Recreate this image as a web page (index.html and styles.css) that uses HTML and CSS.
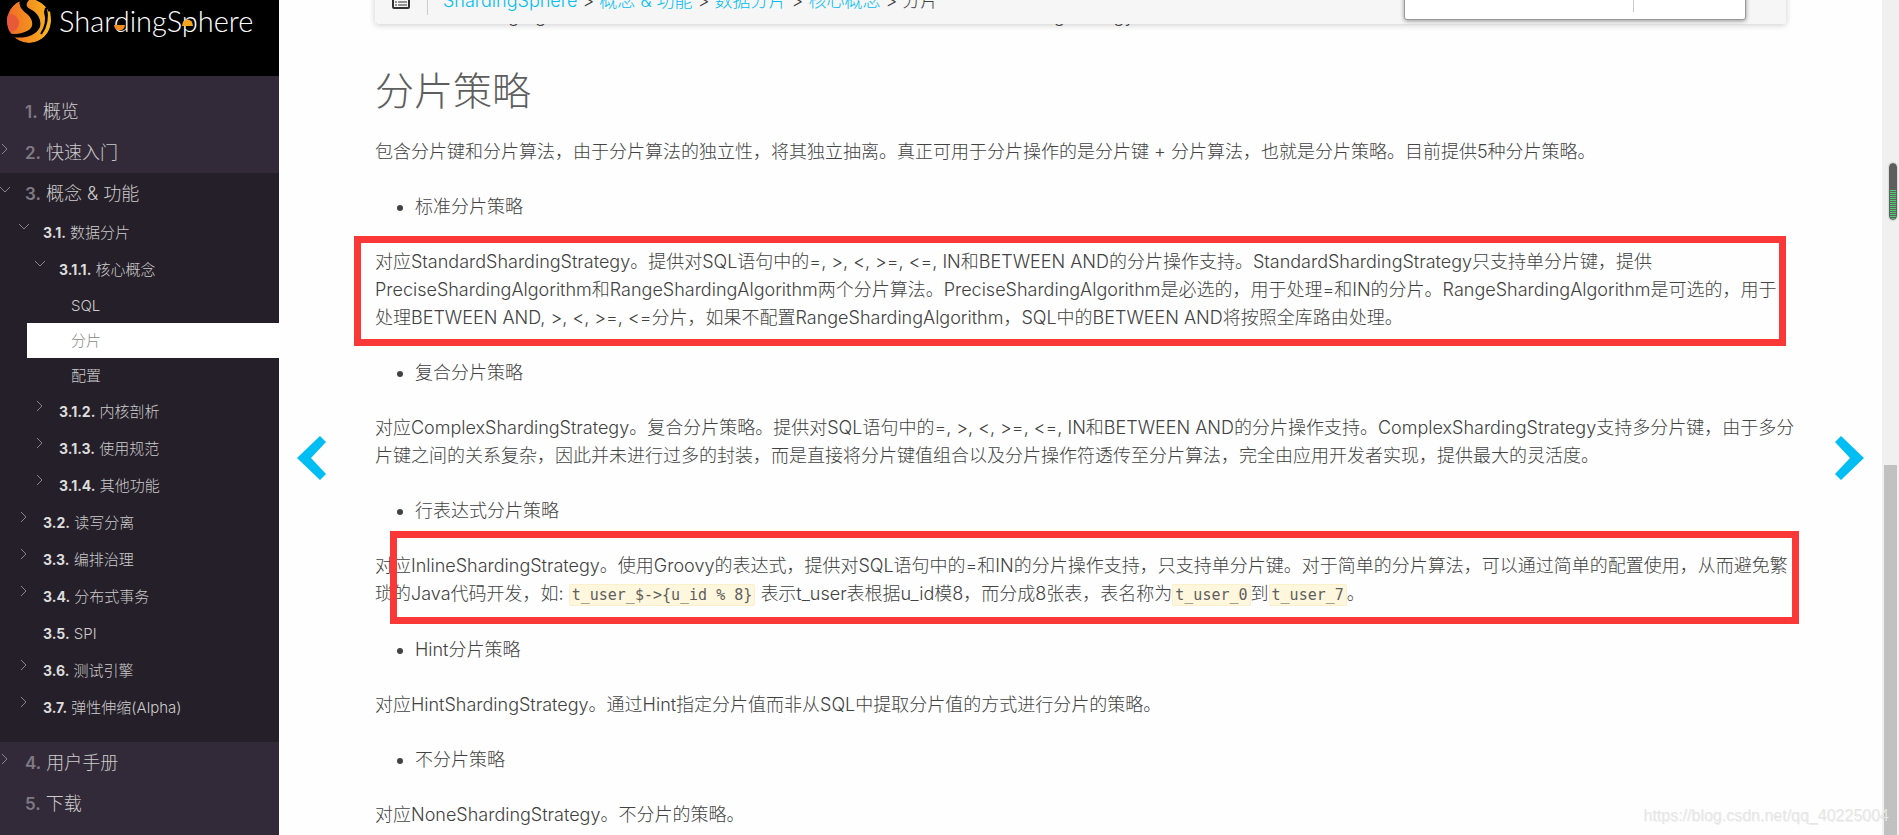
FILE: index.html
```html
<!DOCTYPE html>
<html lang="zh-CN">
<head>
    <meta charset="UTF-8">
    <meta name="viewport" content="width=device-width, initial-scale=1.0">
    <title>分片 :: ShardingSphere</title>
    <link rel="stylesheet" href="styles.css">
</head>
<body>

<nav class="sidebar">
    <a class="logo" href="#" aria-label="ShardingSphere">
        <svg width="279" height="76" viewBox="0 0 279 76">
            <defs>
                <linearGradient id="ball" x1="0" x2="1" y1="0" y2="0">
                    <stop offset="0" stop-color="#ee6a25"/>
                    <stop offset="1" stop-color="#f8b51c"/>
                </linearGradient>
                <clipPath id="ball-clip"><circle cx="29" cy="21" r="22"/></clipPath>
            </defs>
            <g clip-path="url(#ball-clip)">
                <circle cx="29" cy="21" r="22" fill="url(#ball)"/>
                <circle cx="10" cy="23" r="9" fill="#e8593a"/>
                <path d="M20 -1C18 6 22 10 27 14C34 20 34 28 27 31C21 34 14 35 8 33L12 37C24 39 36 36 40 27C42 18 36 12 30 9C25 6 26 3 30 -1Z" fill="#000"/>
            </g>
            <path d="M46 8C48 17 47 26 41 34C46 27 47 19 45 12Z" fill="#000" stroke="#000" stroke-width="2"/>
            <path d="M50 11C52 21 50 30 43 36C47 28 49 20 48 13Z" fill="#f8b51c"/>
            <text class="logo-text" x="59" y="32">ShardingSphere</text>
            <path d="M114 25H125A5 5 0 0 1 114 25Z" fill="#f28a1d"/>
            <path d="M182 26A5 6 0 0 1 193 26Z" fill="#f5a31a"/>
        </svg>
    </a>
    <ul class="menu">
        <li><a href="#"><b>1.</b> 概览</a></li>
        <li><a href="#"><svg class="chevron" viewBox="0 0 10 10"><path d="M2 0L7 5L2 10"/></svg><b>2.</b> 快速入门</a></li>
        <li class="open">
            <a href="#"><svg class="chevron" viewBox="0 0 10 10"><path d="M0 2L5 7L10 2"/></svg><b>3.</b> 概念 &amp; 功能</a>
            <ul class="level-2">
                <li>
                    <a href="#"><svg class="chevron" viewBox="0 0 10 10"><path d="M0 2L5 7L10 2"/></svg><b>3.1.</b> 数据分片</a>
                    <ul class="level-3">
                        <li>
                            <a href="#"><svg class="chevron" viewBox="0 0 10 10"><path d="M0 2L5 7L10 2"/></svg><b>3.1.1.</b> 核心概念</a>
                            <ul class="level-4">
                                <li><a href="#">SQL</a></li>
                                <li class="active"><a href="#">分片</a></li>
                                <li><a href="#">配置</a></li>
                            </ul>
                        </li>
                        <li><a href="#"><svg class="chevron" viewBox="0 0 10 10"><path d="M2 0L7 5L2 10"/></svg><b>3.1.2.</b> 内核剖析</a></li>
                        <li><a href="#"><svg class="chevron" viewBox="0 0 10 10"><path d="M2 0L7 5L2 10"/></svg><b>3.1.3.</b> 使用规范</a></li>
                        <li><a href="#"><svg class="chevron" viewBox="0 0 10 10"><path d="M2 0L7 5L2 10"/></svg><b>3.1.4.</b> 其他功能</a></li>
                    </ul>
                </li>
                <li><a href="#"><svg class="chevron" viewBox="0 0 10 10"><path d="M2 0L7 5L2 10"/></svg><b>3.2.</b> 读写分离</a></li>
                <li><a href="#"><svg class="chevron" viewBox="0 0 10 10"><path d="M2 0L7 5L2 10"/></svg><b>3.3.</b> 编排治理</a></li>
                <li><a href="#"><svg class="chevron" viewBox="0 0 10 10"><path d="M2 0L7 5L2 10"/></svg><b>3.4.</b> 分布式事务</a></li>
                <li><a href="#"><b>3.5.</b> SPI</a></li>
                <li><a href="#"><svg class="chevron" viewBox="0 0 10 10"><path d="M2 0L7 5L2 10"/></svg><b>3.6.</b> 测试引擎</a></li>
                <li><a href="#"><svg class="chevron" viewBox="0 0 10 10"><path d="M2 0L7 5L2 10"/></svg><b>3.7.</b> 弹性伸缩(Alpha)</a></li>
            </ul>
        </li>
        <li><a href="#"><svg class="chevron" viewBox="0 0 10 10"><path d="M2 0L7 5L2 10"/></svg><b>4.</b> 用户手册</a></li>
        <li><a href="#"><b>5.</b> 下载</a></li>
    </ul>
</nav>

<a class="nav-arrow prev" href="#" aria-label="上一页">
    <svg width="30" height="46" viewBox="0 0 30 46"><path d="M23 1L29 7L14 23L29 39L23 45L0 23Z"/></svg>
</a>

<main class="content">
    <div class="topbar">
        <svg class="toc-icon" width="18" height="16" viewBox="0 0 18 16">
            <rect x="1" y="1" width="16" height="14" rx="1" fill="none" stroke="#323232" stroke-width="2"/>
            <path d="M3 6H5M6 6H15M3 9H5M6 9H15M3 12H5M6 12H15" stroke="#323232"/>
        </svg>
        <div class="breadcrumbs">
            <a href="#">ShardingSphere</a> &gt; <a href="#">概念 &amp; 功能</a> &gt; <a href="#">数据分片</a> &gt; <a href="#">核心概念</a> &gt; 分片
        </div>
        <div class="search-popup"></div>
    </div>

    <article>
        <p>对应HintShardingAlgorithm，用于处理使用Hint行分片的场景。需要配合HintShardingStrategy使用。</p>
        <h2>分片策略</h2>
        <p>包含分片键和分片算法，由于分片算法的独立性，将其独立抽离。真正可用于分片操作的是分片键 + 分片算法，也就是分片策略。目前提供5种分片策略。</p>
        <ul><li>标准分片策略</li></ul>
        <p class="marked">对应StandardShardingStrategy。提供对SQL语句中的=, &gt;, &lt;, &gt;=, &lt;=, IN和BETWEEN AND的分片操作支持。StandardShardingStrategy只支持单分片键，提供<br>PreciseShardingAlgorithm和RangeShardingAlgorithm两个分片算法。PreciseShardingAlgorithm是必选的，用于处理=和IN的分片。RangeShardingAlgorithm是可选的，用于<br>处理BETWEEN AND, &gt;, &lt;, &gt;=, &lt;=分片，如果不配置RangeShardingAlgorithm，SQL中的BETWEEN AND将按照全库路由处理。</p>
        <ul><li>复合分片策略</li></ul>
        <p>对应ComplexShardingStrategy。复合分片策略。提供对SQL语句中的=, &gt;, &lt;, &gt;=, &lt;=, IN和BETWEEN AND的分片操作支持。ComplexShardingStrategy支持多分片键，由于多分<br>片键之间的关系复杂，因此并未进行过多的封装，而是直接将分片键值组合以及分片操作符透传至分片算法，完全由应用开发者实现，提供最大的灵活度。</p>
        <ul><li>行表达式分片策略</li></ul>
        <p class="marked marked-inline">对应InlineShardingStrategy。使用Groovy的表达式，提供对SQL语句中的=和IN的分片操作支持，只支持单分片键。对于简单的分片算法，可以通过简单的配置使用，从而避免繁<br>琐的Java代码开发，如: <code>t_user_$-&gt;{u_id % 8}</code> 表示t_user表根据u_id模8，而分成8张表，表名称为<code>t_user_0</code>到<code>t_user_7</code>。</p>
        <ul><li>Hint分片策略</li></ul>
        <p>对应HintShardingStrategy。通过Hint指定分片值而非从SQL中提取分片值的方式进行分片的策略。</p>
        <ul><li>不分片策略</li></ul>
        <p>对应NoneShardingStrategy。不分片的策略。</p>
    </article>
</main>

<a class="nav-arrow next" href="#" aria-label="下一页">
    <svg width="30" height="46" viewBox="0 0 30 46"><path d="M7 1L1 7L16 23L1 39L7 45L30 23Z"/></svg>
</a>

<div class="scrollbar">
    <div class="thumb"></div>
    <div class="meter"></div>
</div>

<div class="watermark">https://blog.csdn.net/qq_40225004</div>

</body>
</html>
```
FILE: styles.css
```css
* {
    box-sizing: border-box;
}
body {
    display: grid;
    grid-template-columns: 279px 96px 1fr 96px 17px;
    grid-template-rows: 100vh;
    height: 100vh;
    margin: 0;
    overflow: hidden;
    background: #fefefe;
    color: #424242;
    font-family: Inter, "Noto Sans CJK SC", sans-serif;
    font-size: 18px;
    font-weight: 300;
    line-height: 28px;
}
ul {
    margin: 0;
    padding: 0;
}
a {
    color: #00bdf3;
    text-decoration: none;
}

/* sidebar */
.sidebar {
    background: #322a38;
    overflow: hidden;
}
.logo {
    display: block;
    height: 76px;
    background: #000;
}
.logo-text {
    fill: #fff;
    font-family: Lato, sans-serif;
    font-size: 29px;
    font-weight: 300;
}
.menu {
    padding-top: 15px;
    list-style: none;
}
.menu ul {
    list-style: none;
    font-size: 15px;
}
.menu a {
    position: relative;
    display: block;
    height: 41px;
    padding-left: 25px;
    color: #ccc;
    line-height: 41px;
}
.menu b {
    color: #807a84;
    font-size: 17px;
    font-weight: 600;
}
.menu ul b {
    color: #ddd;
    font-size: 14px;
    font-weight: 700;
}
.open {
    background: #251f29;
}
.menu .level-2 {
    padding-bottom: 16px;
}
.menu .level-2 a {
    height: 37px;
    padding-left: 43px;
    line-height: 37px;
}
.menu .level-3 a {
    padding-left: 59px;
}
.menu .level-4 a {
    height: 35px;
    padding-left: 71px;
    line-height: 35px;
}
.menu .active a {
    margin-left: 27px;
    padding-left: 44px;
    background: #fff;
    color: #888;
}
.chevron {
    position: absolute;
    top: 12px;
    left: 0;
    width: 10px;
    height: 10px;
    fill: none;
    stroke: #88848b;
    overflow: visible;
}
.level-2 .chevron {
    top: 8px;
    left: 19px;
}
.level-3 .chevron {
    left: 35px;
}

/* previous / next page */
.nav-arrow {
    display: flex;
    align-items: center;
    justify-content: center;
    padding-top: 81px;
    fill: #00bdf3;
}
.prev {
    padding-right: 30px;
}
.next {
    padding-left: 30px;
}

/* page */
.content {
    position: relative;
    min-width: 0;
}
.topbar {
    position: absolute;
    top: -26px;
    left: 0;
    right: 0;
    display: flex;
    align-items: center;
    height: 50px;
    padding: 4px 0 0 17px;
    border-radius: 2px;
    background: #f6f6f6;
    box-shadow: 0 1px 6px rgba(0, 0, 0, 0.2);
}
.breadcrumbs {
    margin-left: 17px;
    padding-left: 15px;
    border-left: 1px solid #ccc;
}
.search-popup {
    position: absolute;
    right: 40px;
    bottom: 4px;
    width: 342px;
    height: 40px;
    border: 1px solid #999;
    border-radius: 3px;
    background: linear-gradient(#ccc, #ccc) 228px 0 / 1px 31px no-repeat #fff;
    box-shadow: 0 1px 4px rgba(0, 0, 0, 0.4);
}
article {
    display: flex;
    flex-direction: column;
    gap: 27px;
    padding-top: 2px;
    white-space: nowrap;
}
article p, article h2 {
    margin: 0;
}
article h2 {
    margin-top: 6px;
    color: #5e5e5e;
    font-size: 39px;
    font-weight: 300;
    line-height: 56px;
}
article h2 + p {
    margin-top: -8px;
}
article ul {
    padding-left: 40px;
}
code {
    padding: 1px 2px;
    border: 1px solid #fbf0cb;
    border-radius: 2px;
    background: #fff7dd;
    color: #5e5e5e;
    font-family: "DejaVu Sans Mono", monospace;
    font-size: 15px;
}

/* red frames drawn over the text */
.marked {
    position: relative;
}
.marked::after {
    content: "";
    position: absolute;
    top: -12px;
    bottom: -14px;
    left: -21px;
    right: 0;
    border: 7px solid #fb3838;
}
.marked-inline::after {
    top: -21px;
    bottom: -15px;
    left: 15px;
    right: -13px;
}

.scrollbar {
    position: relative;
    display: flex;
    flex-direction: column;
    justify-content: flex-end;
    padding: 0 2px;
    background: #f0f0f0;
}
.thumb {
    height: 370px;
    background: #c1c1c1;
}
.meter {
    position: absolute;
    top: 163px;
    right: 2px;
    width: 8px;
    height: 57px;
    border: 1px solid #5e5e5e;
    border-radius: 4px;
    background: linear-gradient(#5e5e5e, #5e5e5e) 0 0 / 100% 25px no-repeat, repeating-linear-gradient(#4cd070 0 1px, #5e5e5e 1px 2px);
    box-shadow: 0 0 2px rgba(0, 0, 0, 0.3);
}
.watermark {
    position: absolute;
    right: 10px;
    bottom: 5px;
    color: #e6e6e6;
    font-family: "Liberation Sans", sans-serif;
    font-size: 16px;
    font-weight: 400;
    text-shadow: 1px 1px 0 rgba(0, 0, 0, 0.06);
}
```
